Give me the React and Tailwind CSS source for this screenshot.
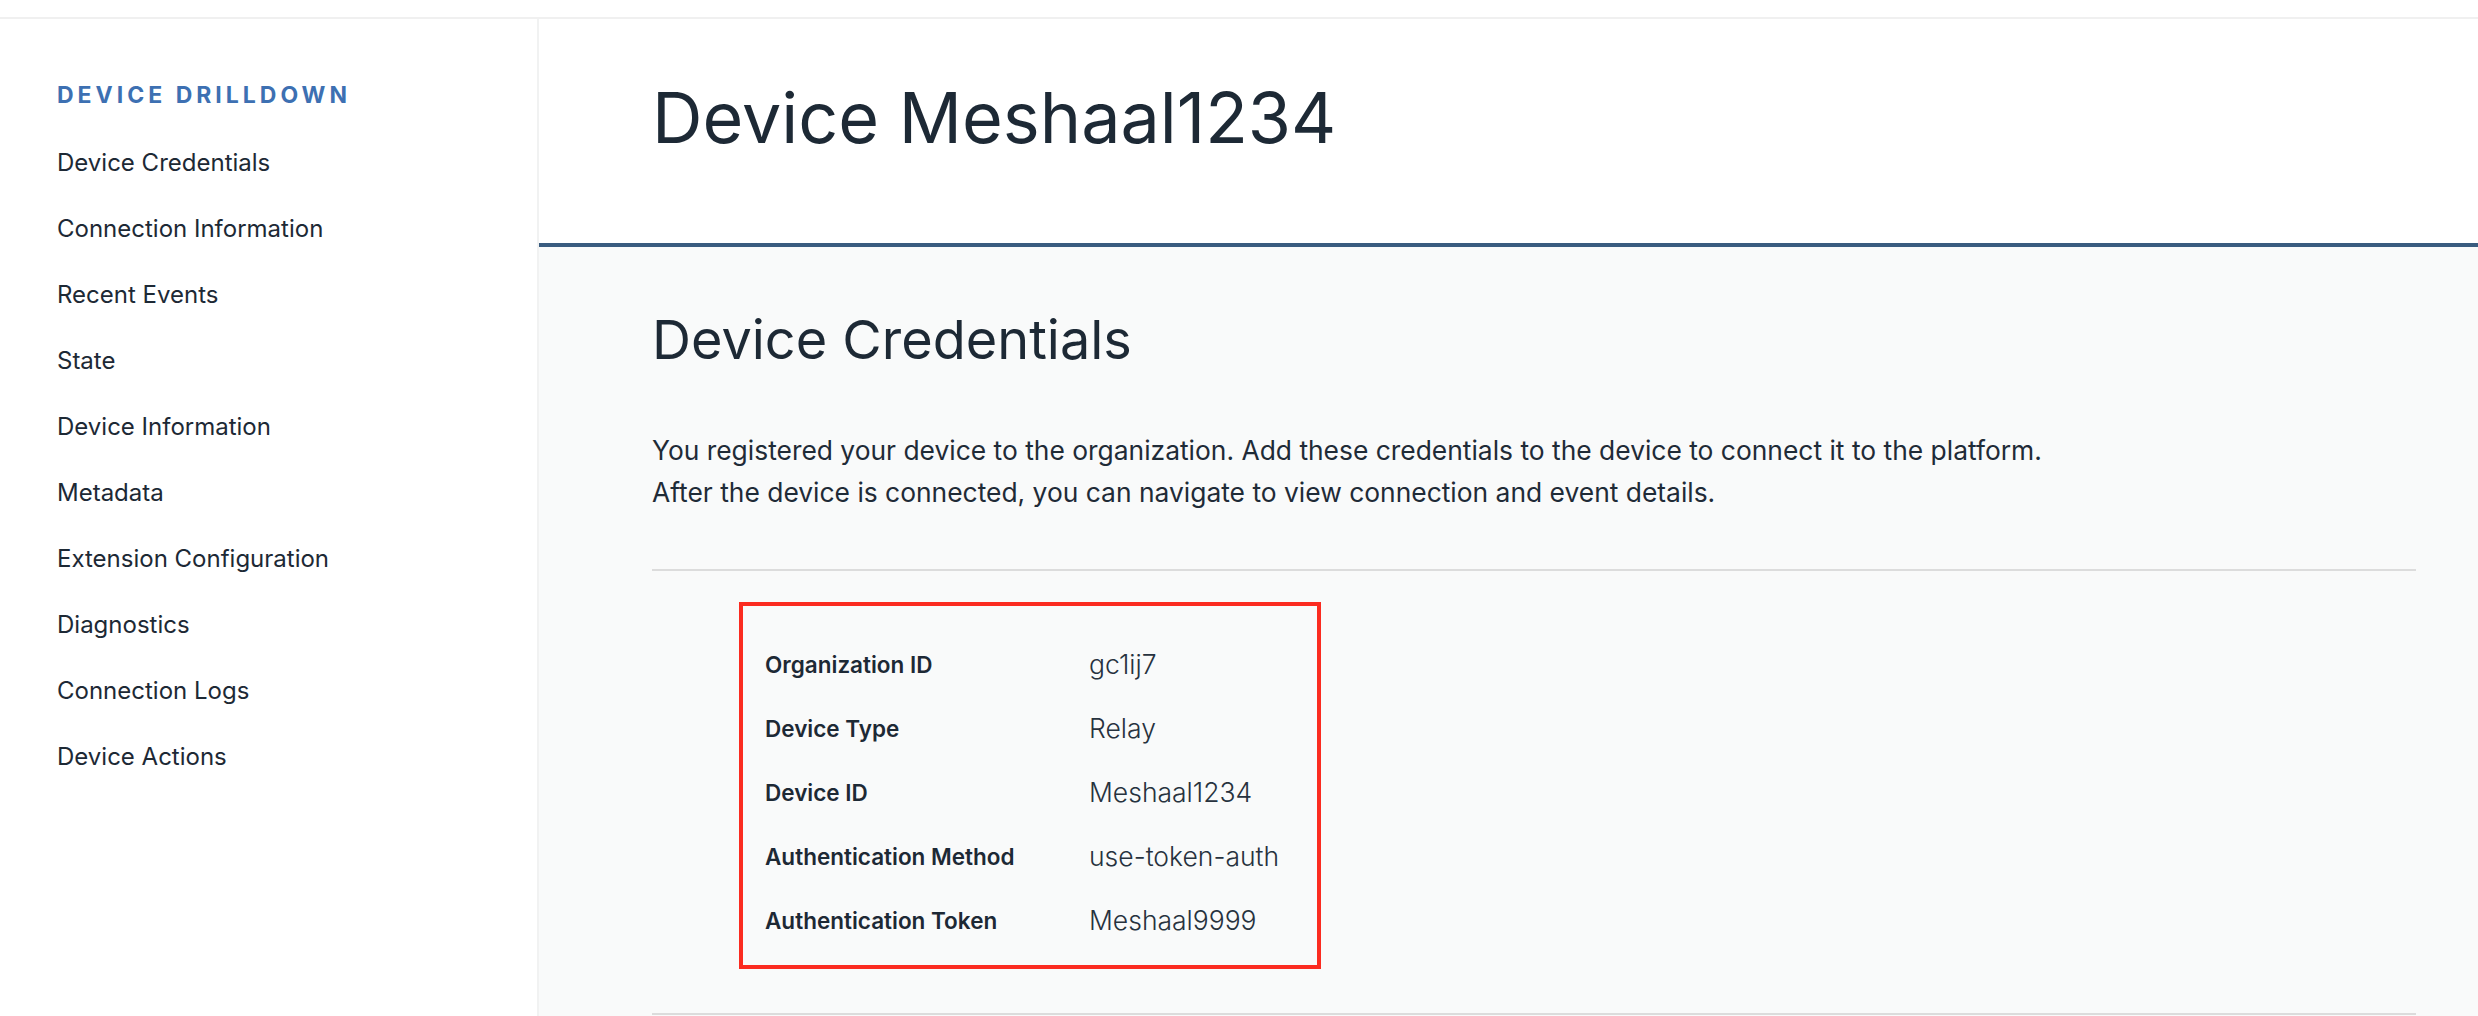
const navItems = [
  'Device Credentials',
  'Connection Information',
  'Recent Events',
  'State',
  'Device Information',
  'Metadata',
  'Extension Configuration',
  'Diagnostics',
  'Connection Logs',
  'Device Actions',
];

const credentials = [
  ['Organization ID', 'gc1ij7'],
  ['Device Type', 'Relay'],
  ['Device ID', 'Meshaal1234'],
  ['Authentication Method', 'use-token-auth'],
  ['Authentication Token', 'Meshaal9999'],
];

export default function App() {
  return (
    <div className="min-h-screen bg-white font-['Inter',sans-serif] text-[#1d2935]">
      <div className="h-[19px] border-b-2 border-[#f0f0f0]" />
      <div className="flex">
        {/* Sidebar */}
        <aside className="w-[539px] shrink-0 border-r-2 border-[#f1f2f2] pl-[57px] pt-[61px] min-h-[997px]">
          <h2 className="text-[23px] font-bold leading-[30px] tracking-[4px] text-[#3d70b2]">
            DEVICE DRILLDOWN
          </h2>
          <ul className="mt-[20px]">
            {navItems.map((item) => (
              <li key={item} className="text-[24px] leading-[66px]">
                {item}
              </li>
            ))}
          </ul>
        </aside>

        {/* Main */}
        <main className="flex-1 min-w-0">
          <header className="h-[228px] border-b-4 border-[#395c7f] pl-[113px] pt-[54px]">
            <h1 className="text-[70px] leading-[90px] font-normal">Device Meshaal1234</h1>
          </header>

          <section className="bg-[#f9fafa] pl-[113px] pr-[62px] pt-[58px] min-h-[769px]">
            <h2 className="text-[54px] leading-[70px] font-normal">Device Credentials</h2>
            <p className="mt-[54px] text-[26.4px] leading-[42px] text-[#1f2b37]">
              You registered your device to the organization. Add these credentials to the device to connect it to the platform.
              <br />
              After the device is connected, you can navigate to view connection and event details.
            </p>

            <div className="mt-[56px] border-t-2 border-[#dcdcdc] pt-[31px] pb-[44px]">
              <div className="ml-[87px] w-[582px] border-4 border-[#fb2b20] pl-[22px] pt-[27px] pb-[12px]">
                <table>
                  <tbody>
                    {credentials.map(([label, value]) => (
                      <tr key={label} className="h-[64px]">
                        <td className="w-[324px] text-[22.5px] font-semibold">{label}</td>
                        <td className="text-[26.5px] font-light text-[#27323e]">{value}</td>
                      </tr>
                    ))}
                  </tbody>
                </table>
              </div>
            </div>
            <div className="border-t-2 border-[#dcdcdc]" />
          </section>
        </main>
      </div>
    </div>
  );
}
